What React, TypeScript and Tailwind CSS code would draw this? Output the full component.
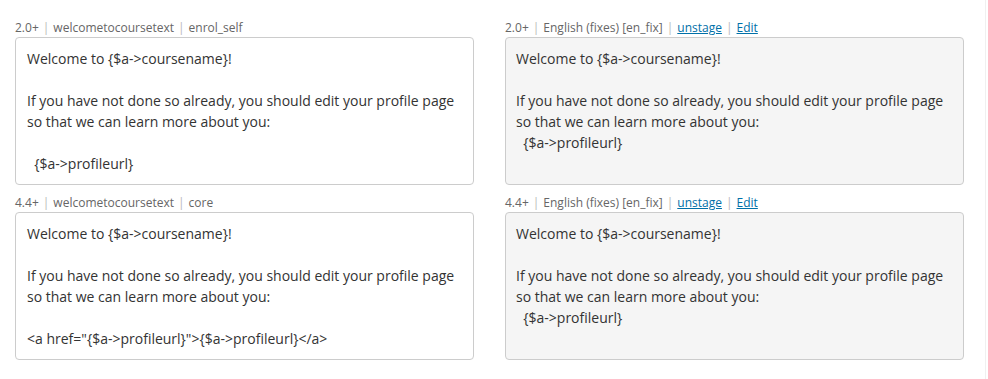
import React from 'react'

type Row = {
  version: string
  stringId: string
  component: string
  original: React.ReactNode
  translation: React.ReactNode
}

const Sep = () => <span className="mx-[4px] text-[#b9b9b9]">|</span>

const rows: Row[] = [
  {
    version: '2.0+',
    stringId: 'welcometocoursetext',
    component: 'enrol_self',
    original: (
      <>
        Welcome to {'{$a->coursename}'}!{'\n\n'}If you have not done so already, you should edit your profile page
        {'\n'}so that we can learn more about you:{'\n\n'}  {'{$a->profileurl}'}
      </>
    ),
    translation: (
      <>
        Welcome to {'{$a->coursename}'}!{'\n\n'}If you have not done so already, you should edit your profile page
        {'\n'}so that we can learn more about you:{'\n'}  {'{$a->profileurl}'}
      </>
    ),
  },
  {
    version: '4.4+',
    stringId: 'welcometocoursetext',
    component: 'core',
    original: (
      <>
        Welcome to {'{$a->coursename}'}!{'\n\n'}If you have not done so already, you should edit your profile page
        {'\n'}so that we can learn more about you:{'\n\n'}
        {'<a href="{$a->profileurl}">{$a->profileurl}</a>'}
      </>
    ),
    translation: (
      <>
        Welcome to {'{$a->coursename}'}!{'\n\n'}If you have not done so already, you should edit your profile page
        {'\n'}so that we can learn more about you:{'\n'}  {'{$a->profileurl}'}
      </>
    ),
  },
]

export default function App() {
  return (
    <div className="h-[379px] w-[986px] border-r border-[#f0f0f0] bg-white font-['Open_Sans',sans-serif] text-[#333]">
      <div className="flex flex-col gap-[8px] pl-[15px] pr-[21px] pt-[18px]">
        {rows.map((row, i) => (
          <div key={i} className="grid grid-cols-2 gap-x-[31px]">
            <div className="flex flex-col">
              <div className="h-[19px] text-[12px] leading-[19px] text-[#666]">
                {row.version}
                <Sep />
                {row.stringId}
                <Sep />
                {row.component}
              </div>
              <div className="flex-1 whitespace-pre-wrap rounded-[4px] border border-[#cccccc] bg-white px-[11px] py-[10px] text-[14px] leading-[21px]">
                {row.original}
              </div>
            </div>
            <div className="flex flex-col">
              <div className="h-[19px] text-[12px] leading-[19px] text-[#666]">
                {row.version}
                <Sep />
                English (fixes) [en_fix]
                <Sep />
                <a href="#" className="text-[#0070a8] underline">
                  unstage
                </a>
                <Sep />
                <a href="#" className="text-[#0070a8] underline">
                  Edit
                </a>
              </div>
              <div className="flex-1 whitespace-pre-wrap rounded-[4px] border border-[#cccccc] bg-[#f5f5f5] px-[10px] py-[10px] text-[14px] leading-[21px]">
                {row.translation}
              </div>
            </div>
          </div>
        ))}
      </div>
    </div>
  )
}
